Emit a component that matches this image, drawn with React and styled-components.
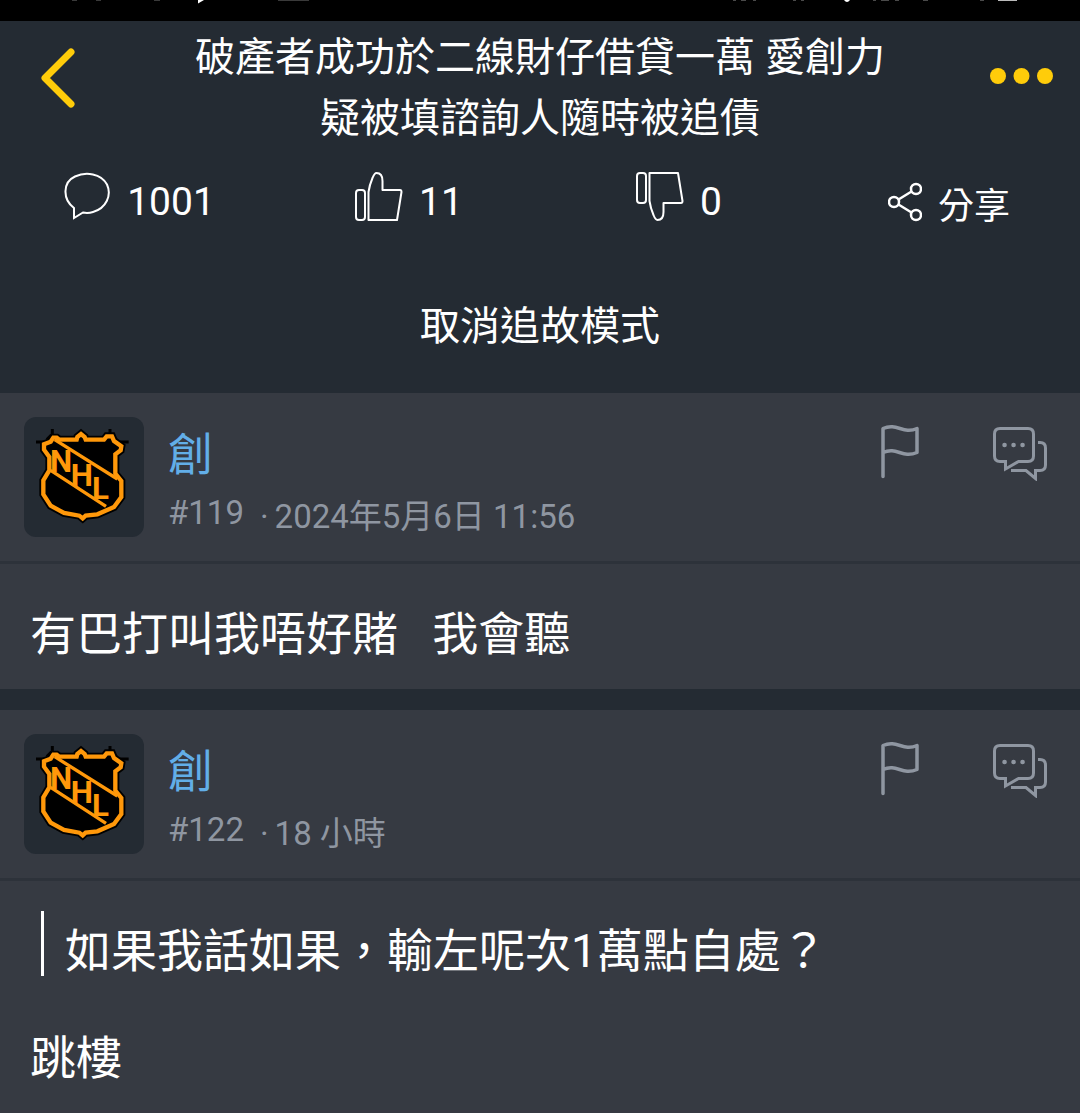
import React from 'react';
import styled, { createGlobalStyle } from 'styled-components';

const posts = [
	{
		id: 119,
		author: '創',
		time: '2024年5月6日 11:56',
		text: '有巴打叫我唔好賭   我會聽',
	},
	{
		id: 122,
		author: '創',
		time: '18 小時',
		quote: '如果我話如果，輸左呢次1萬點自處？',
		text: '跳樓',
	},
];

const shieldPath =
	'M188 98l2-8 11-9 11 9 3 8h55l8-10h16l6 14 22 16-2 12-16 12v58l18 22v48l-22 30-50 22-35 4-9 8-10-8-46-8-40-22-22-34v-42l18-30v-40l-16-22v-16l20-8 8-12h10l8 6z';

function Shield() {
	return (
		<svg width='120' height='120' viewBox='30 30 360 360' fill='none' aria-hidden='true'>
			<path d='M66 105h30M316 105h28M115 66v24M288 66v24' stroke='#000' strokeWidth='9' />
			<path d='M115 86l-14 14M288 86l18 16' stroke='#000' strokeWidth='16' />
			<path d={shieldPath} fill='#000' stroke='#000' strokeWidth='24' />
			<path d={shieldPath} stroke='#ff980a' strokeWidth='13' />
			<path d='M122 98l188 118M110 190l166 108' stroke='#ff980a' strokeWidth='10' />
			<ShieldText x='108 170 234' y='194 237 277'>
				NHL
			</ShieldText>
		</svg>
	);
}

function Post({ post }) {
	return (
		<Card>
			<PostHead>
				<Avatar>
					<Shield />
				</Avatar>
				<Info>
					<Author href='#'>{post.author}</Author>
					<Meta>
						<span>#{post.id}</span>
						<Time>
							<span>·</span>
							{post.time}
						</Time>
					</Meta>
				</Info>
				<Actions>
					<IconButton aria-label='Report'>
						<svg width='44' height='56' viewBox='0 0 44 56' fill='none' stroke='#8f96a1' strokeWidth='3.500' strokeLinecap='round' strokeLinejoin='round'>
							<path d='M5 51.500V3.500c14-6 20 6 34 0v24c-15 6-20-6-34 0' />
						</svg>
					</IconButton>
					<IconButton aria-label='Replies'>
						<svg width='56' height='56' viewBox='0 0 56 56' fill='none' stroke='#8f96a1' strokeWidth='3'>
							<path d='M8 3.500h28q5.500 0 5.500 5.500v22q0 5.500-5.500 5.500H26.500L13.500 44v-7.500H8q-5.500 0-5.500-5.500V9q0-5.500 5.500-5.500z' />
							<path d='M46 17.500h2q5.500 0 5.500 5.500v17q0 5.500-5.500 5.500h-4.500v8L34 45.500H19' />
							<path d='M12.500 20h.1M21.500 20h.1M30.500 20h.1' strokeWidth='4.500' strokeLinecap='round' />
						</svg>
					</IconButton>
				</Actions>
			</PostHead>
			<Body>
				{post.quote && <Quote>{post.quote}</Quote>}
				<Text>{post.text}</Text>
			</Body>
		</Card>
	);
}

function App() {
	return (
		<>
			<GlobalStyle />
			<StatusBar>
				<svg width='240' height='4' viewBox='0 0 240 4' aria-hidden='true'>
					<path d='M0 0h5v1H0zM24 0h5v1h-5zM82 0h6v1h-6zM206 0h31v1h-31z' fill='#3a3a3a' />
					<path d='M126 0h6l-6 3.500z' fill='#fff' />
				</svg>
				<svg width='288' height='4' viewBox='0 0 288 4' aria-hidden='true'>
					<path d='M3 0h3v1H3zM11 0h5v1h-5zM23 0h3v1h-3zM63 0h3v1h-3zM71 0h3v1h-3zM143 0h3v1h-3zM151 0h8v1h-8zM165 0h4v1h-4zM193 0h5v1h-5zM250 0h4v1h-4z' fill='#4a4a4a' />
					<path d='M114 0h6q-3 4-6 0z' fill='#fff' />
					<path d='M268 0h19v1h-19z' fill='#bbb' />
				</svg>
			</StatusBar>
			<Header>
				<TitleRow>
					<IconButton aria-label='Back'>
						<svg width='36' height='62' viewBox='0 0 36 62' fill='none' stroke='#ffcc0a' strokeWidth='7' strokeLinecap='round' strokeLinejoin='round'>
							<path d='M31 5L5 31l26 26' />
						</svg>
					</IconButton>
					<Title>
						破產者成功於二線財仔借貸一萬 愛創力
						<br />
						疑被填諮詢人隨時被追債
					</Title>
					<IconButton aria-label='More'>
						<svg width='64' height='62' viewBox='0 0 64 62' fill='#ffcc0a'>
							<circle cx='9' cy='29' r='8' />
							<circle cx='32.500' cy='29' r='8' />
							<circle cx='56' cy='29' r='8' />
						</svg>
					</IconButton>
				</TitleRow>
				<Stats>
					<Stat>
						<svg width='48' height='56' viewBox='0 0 48 56' fill='none' stroke='#fff' strokeWidth='2'>
							<path d='M11 40C-1 31 0 14 12 8.500c11-5 26-3 32 8 5 11-1 24-14 27.500q-5 1.500-10 .5L11 50z' />
						</svg>
						<Label>1001</Label>
					</Stat>
					<Stat>
						<svg width='48' height='56' viewBox='0 0 48 56' fill='none' stroke='#fff' strokeWidth='2' strokeLinejoin='round'>
							<rect x='1' y='22' width='9' height='30' rx='3' />
							<path d='M13.500 52V24q1-7 4-14 2-5 4-5 6 0 6 8v9H45q1.500 0 1.500 2L42 52z' />
						</svg>
						<Label>11</Label>
					</Stat>
					<Stat>
						<svg width='48' height='56' viewBox='0 0 48 56' fill='none' stroke='#fff' strokeWidth='2' strokeLinejoin='round'>
							<rect x='1' y='5' width='9' height='30' rx='3' />
							<path d='M13.500 5v28q1 7 4 14 2 5 4 5 6 0 6-8v-9H45q1.500 0 1.500-2L42 5z' />
						</svg>
						<Label>0</Label>
					</Stat>
					<Stat>
						<svg width='34' height='68' viewBox='0 0 34 68' fill='none' stroke='#fff' strokeWidth='2.500'>
							<circle cx='6' cy='34' r='5' />
							<circle cx='28' cy='21' r='5' />
							<circle cx='28' cy='47' r='5' />
							<path d='M10.500 31.500L23.500 23.500M10.500 36.500l13 8' />
						</svg>
						<Label $share>分享</Label>
					</Stat>
				</Stats>
				<ModeButton>取消追故模式</ModeButton>
			</Header>
			<List>
				{posts.map((post) => (
					<Post key={post.id} post={post} />
				))}
			</List>
		</>
	);
}

export default App;

const GlobalStyle = createGlobalStyle`
	* {
		box-sizing: border-box;
	}

	body {
		margin: 0;
		background: #242b33;
		color: #fff;
		font-family: Roboto, 'Noto Sans CJK TC', sans-serif;
	}

	button {
		padding: 0;
		border: 0;
		background: none;
		color: inherit;
		font: inherit;
		cursor: pointer;
	}

	svg {
		display: block;
		flex: none;
	}
`;

const StatusBar = styled.div`
	display: flex;
	justify-content: space-between;
	height: 21px;
	padding: 0 62px 0 72px;
	background: #000;
`;

const Header = styled.header`
	padding-bottom: 36px;
`;

const TitleRow = styled.div`
	display: grid;
	grid-template-columns: 64px 1fr 64px;
	align-items: center;
	padding: 6px 27px 0 40px;
`;

const IconButton = styled.button`
	flex: none;
	align-self: start;

	${TitleRow} & {
		padding-top: 20px;
	}
`;

const Title = styled.h1`
	margin: 0;
	padding-right: 13px;
	font-size: 40px;
	font-weight: 400;
	line-height: 61px;
	text-align: center;
`;

const Stats = styled.div`
	display: grid;
	grid-template-columns: repeat(4, 1fr);
	padding-top: 19px;
`;

const Stat = styled.button`
	display: flex;
	align-items: flex-start;
	justify-content: center;
	gap: 16px;
	padding-left: 8px;
`;

const Label = styled.span`
	font-size: ${(props) => (props.$share ? 36 : 39)}px;
	line-height: ${(props) => (props.$share ? 78 : 68)}px;
`;

const ModeButton = styled.button`
	display: block;
	width: 100%;
	margin-top: 51px;
	font-size: 40px;
	line-height: 60px;
`;

const List = styled.main`
	display: flex;
	flex-direction: column;
	gap: 21px;
`;

const Card = styled.article`
	background: #363a42;
`;

const PostHead = styled.div`
	display: flex;
	padding: 24px 32px 24px 24px;
	border-bottom: 3px solid #2d323a;
`;

const Avatar = styled.div`
	width: 120px;
	height: 120px;
	border-radius: 12px;
	background: #242b33;
`;

const ShieldText = styled.text`
	fill: #ff980a;
	font-family: Roboto, sans-serif;
	font-size: 94px;
	font-weight: 700;
`;

const Info = styled.div`
	flex: 1;
	padding: 2px 0 0 24px;
`;

const Author = styled.a`
	display: block;
	color: #62aee8;
	font-size: 45px;
	line-height: 74px;
	text-decoration: none;
`;

const Meta = styled.div`
	display: flex;
	gap: 16px;
	color: #8f96a1;
	font-size: 33px;
	line-height: 40px;
`;

const Time = styled.time`
	display: flex;
	gap: 6px;
	padding-top: 4px;
`;

const Actions = styled.div`
	display: flex;
	align-items: flex-start;
	gap: 70px;
	padding-top: 8px;
`;

const Body = styled.div`
	padding: 30px;
	font-size: 46px;
	line-height: 49px;
`;

const Text = styled.p`
	margin: 0;
	padding-top: 16px;
	white-space: pre-wrap;
`;

const Quote = styled.blockquote`
	margin: 0 0 42px 11px;
	padding: 16px 0 0 21px;
	border-left: 3px solid #fff;
`;
